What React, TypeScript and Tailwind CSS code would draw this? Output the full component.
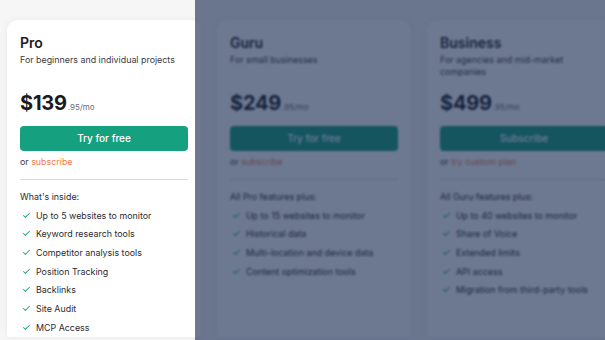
import { Check } from "lucide-react";

type Plan = {
  name: string;
  description: string;
  price: string;
  cta: string;
  altPrefix: string;
  altLink: string;
  featuresTitle: string;
  features: string[];
};

const plans: Plan[] = [
  {
    name: "Pro",
    description: "For beginners and individual projects",
    price: "$139",
    cta: "Try for free",
    altPrefix: "or ",
    altLink: "subscribe",
    featuresTitle: "What's inside:",
    features: [
      "Up to 5 websites to monitor",
      "Keyword research tools",
      "Competitor analysis tools",
      "Position Tracking",
      "Backlinks",
      "Site Audit",
      "MCP Access",
    ],
  },
  {
    name: "Guru",
    description: "For small businesses",
    price: "$249",
    cta: "Try for free",
    altPrefix: "or ",
    altLink: "subscribe",
    featuresTitle: "All Pro features plus:",
    features: [
      "Up to 15 websites to monitor",
      "Historical data",
      "Multi-location and device data",
      "Content optimization tools",
    ],
  },
  {
    name: "Business",
    description: "For agencies and mid-market companies",
    price: "$499",
    cta: "Subscribe",
    altPrefix: "or ",
    altLink: "try custom plan",
    featuresTitle: "All Guru features plus:",
    features: [
      "Up to 40 websites to monitor",
      "Share of Voice",
      "Extended limits",
      "API access",
      "Migration from third-party tools",
    ],
  },
];

function PlanCard({ plan }: { plan: Plan }) {
  return (
    <div className="w-[194px] shrink-0 rounded-t-[10px] bg-white px-[13px] pt-[13px] shadow-[0_0_6px_rgba(0,0,0,0.06)]">
      <h3 className="text-[14px] font-semibold leading-[20px] text-[#1b1b1f]">
        {plan.name}
      </h3>
      <p className="mt-[1px] h-[24px] text-[8.9px] leading-[12px] text-[#3a3a40]">
        {plan.description}
      </p>

      <div className="mt-[13px] flex items-baseline leading-[24px]">
        <span className="text-[20px] font-bold tracking-[-0.2px] text-[#1b1b1f]">
          {plan.price}
        </span>
        <span className="ml-[1px] text-[8px] text-[#6b6b73]">.95/mo</span>
      </div>

      <button className="mt-[7px] flex h-[25px] w-full items-center justify-center rounded-[4px] bg-[#15a07f] text-[10px] font-medium text-white">
        {plan.cta}
      </button>

      <p className="mt-[5px] text-[8.9px] leading-[12px] text-[#3a3a40]">
        {plan.altPrefix}
        <span className="text-[#f37a4a]">{plan.altLink}</span>
      </p>

      <div className="mt-[11px] h-px w-full bg-[#dcdce0]" />

      <p className="mt-[11px] text-[8.9px] leading-[12px] text-[#2b2b30]">
        {plan.featuresTitle}
      </p>

      <ul className="mt-[3px]">
        {plan.features.map((feature) => (
          <li
            key={feature}
            className="flex h-[18.67px] items-center text-[8.9px] text-[#2b2b30]"
          >
            <Check
              size={9}
              strokeWidth={2.75}
              className="ml-[2px] mr-[5px] text-[#2aa785]"
            />
            {feature}
          </li>
        ))}
      </ul>
    </div>
  );
}

function App() {
  return (
    <div
      className="relative h-[340px] w-[605px] overflow-hidden bg-[#f6f6f7]"
      style={{ fontFamily: "Inter, 'Liberation Sans', sans-serif" }}
    >
      <div className="flex gap-[16px] pl-[7px] pt-[20px]">
        {plans.map((plan) => (
          <PlanCard key={plan.name} plan={plan} />
        ))}
      </div>

      <div className="absolute bottom-0 left-[195px] right-0 top-0 bg-[rgba(20,38,78,0.62)] backdrop-blur-[0.8px]" />
    </div>
  );
}

export default App;
